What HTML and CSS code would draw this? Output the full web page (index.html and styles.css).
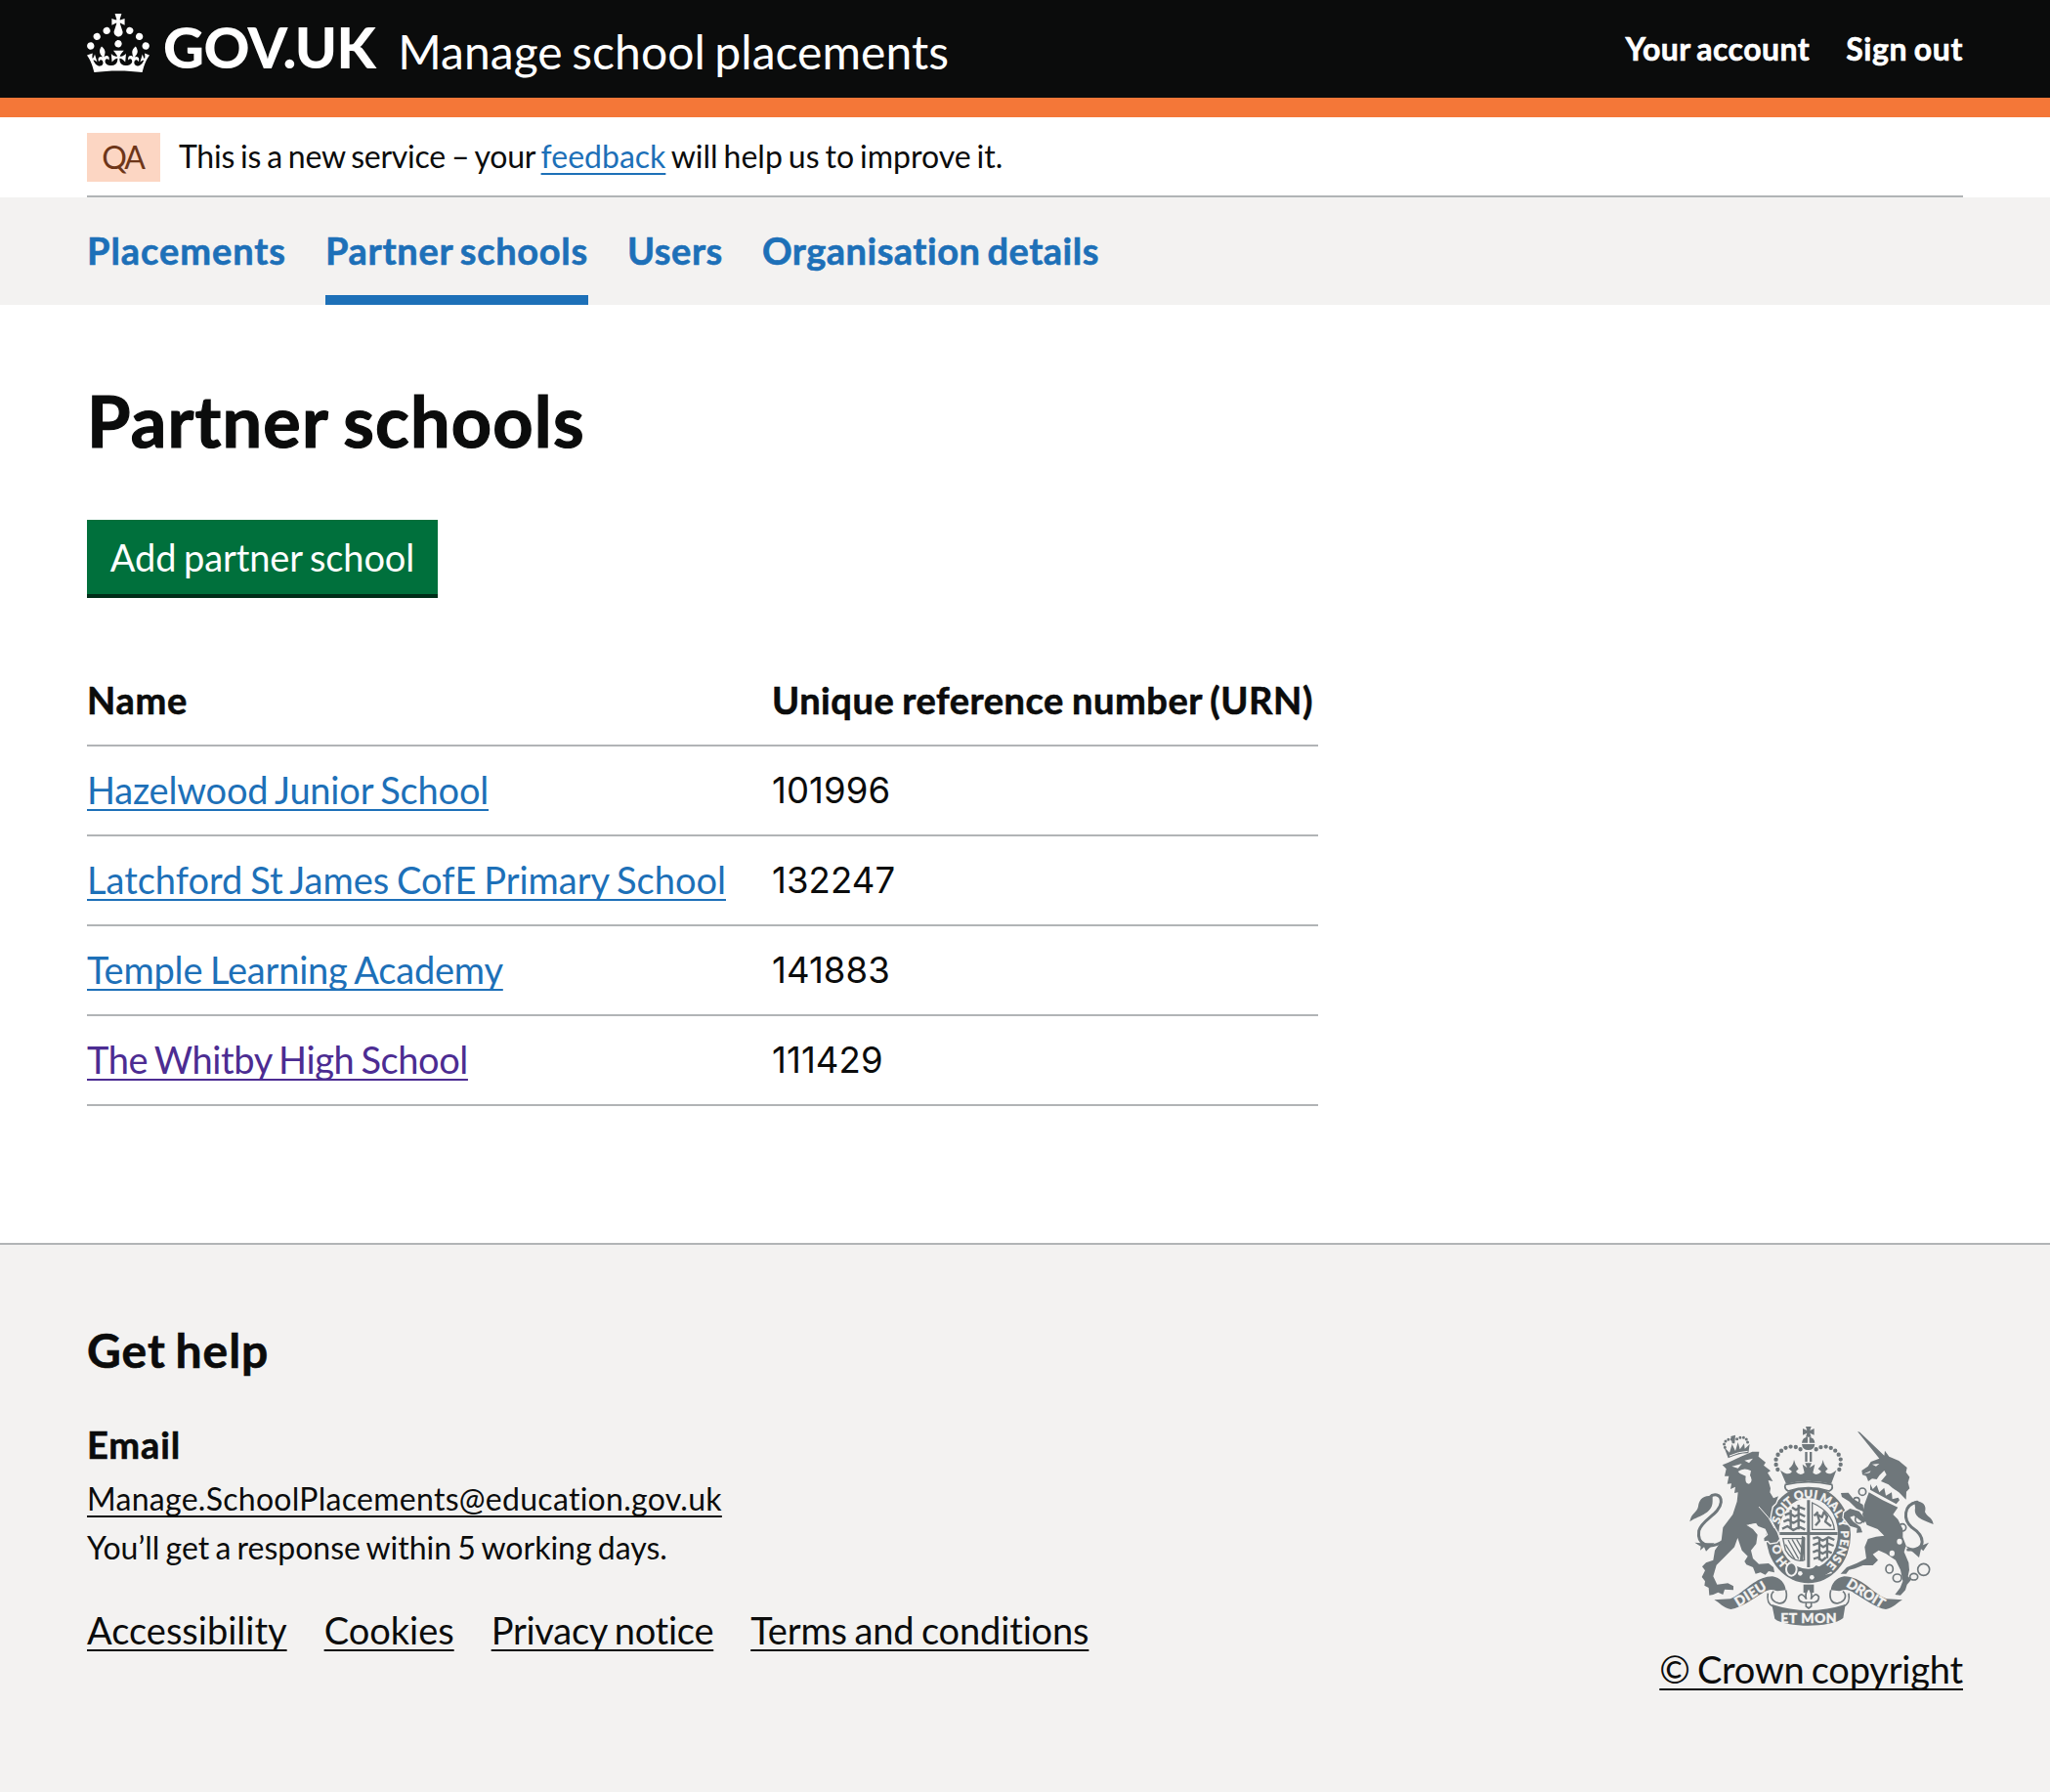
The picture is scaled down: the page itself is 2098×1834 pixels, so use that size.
FILE: index.html
```html
<!DOCTYPE html>
<html lang="en">
<head>
<meta charset="utf-8">
<title>Partner schools - Manage school placements - GOV.UK</title>
<link rel="stylesheet" href="styles.css">
</head>
<body>
<header class="header">
  <div class="container header-row">
    <a class="brand" href="#">
      <svg class="crown" viewBox="0 0 32 30" aria-hidden="true"><path d="M22.6 10.4c-1 .4-2-.1-2.4-1-.4-.9.1-2 1-2.4.9-.4 2 .1 2.4 1s-.1 2-1 2.4m-5.9 6.7c-.9.4-2-.1-2.4-1-.4-.9.1-2 1-2.4.9-.4 2 .1 2.4 1s-.1 2-1 2.4m10.8-3.7c-1 .4-2-.1-2.4-1-.4-.9.1-2 1-2.4.9-.4 2 .1 2.4 1s0 2-1 2.4m3.3 4.8c-1 .4-2-.1-2.4-1-.4-.9.1-2 1-2.4.9-.4 2 .1 2.4 1s-.1 2-1 2.4M17 4.7l2.3 1.2V2.5l-2.3.7-.2-.2.9-3h-3.4l.9 3-.2.2c-.1.1-2.3-.7-2.3-.7v3.4L15 4.7c.1.1.1.2.2.2l-1.3 4c-.1.2-.1.4-.1.6 0 1.1.8 2 1.9 2.2h.7c1-.2 1.9-1.1 1.9-2.1 0-.2 0-.4-.1-.6l-1.3-4c-.1-.2 0-.2.1-.3m-7.6 5.7c.9.4 2-.1 2.4-1 .4-.9-.1-2-1-2.4-.9-.4-2 .1-2.4 1s0 2 1 2.4m-5 3c.9.4 2-.1 2.4-1 .4-.9-.1-2-1-2.4-.9-.4-2 .1-2.4 1s.1 2 1 2.4m-3.2 4.8c.9.4 2-.1 2.4-1 .4-.9-.1-2-1-2.4-.9-.4-2 .1-2.4 1s0 2 1 2.4m14.8 11c4.4 0 8.6.3 12.3.8 1.1-4.5 2.4-7 3.7-8.8l-2.5-.9c.2 1.3.3 1.9 0 2.7-.4-.4-.8-1.1-1.1-2.3l-1.2 4c.7-.5 1.3-.8 2-.9-1.1 2.5-2.6 3.1-3.5 3-1.1-.2-1.7-1.2-1.5-2.1.3-1.2 1.5-1.5 2.1-.1 1.1-2.3-.8-3-2-2.3 1.9-1.9 2.1-3.5.6-5.6-2.1 1.6-2.1 3.2-1.2 5.5-1.2-1.4-3.2-.6-2.5 1.6.9-1.4 2.1-.5 1.9.8-.2 1.1-1.7 2.1-3.5 1.9-2.7-.2-2.9-2.1-2.9-3.6.7-.1 1.9.5 2.9 1.9l.4-4.3c-1.1 1.1-2.1 1.4-3.2 1.4.4-1.2 2.1-3 2.1-3h-5.4s1.7 1.9 2.1 3c-1.1 0-2.1-.2-3.2-1.4l.4 4.3c1-1.4 2.2-2 2.9-1.9-.1 1.5-.2 3.4-2.9 3.6-1.9.2-3.4-.8-3.5-1.9-.2-1.3 1-2.2 1.9-.8.7-2.3-1.2-3-2.5-1.6.9-2.2.9-3.9-1.2-5.5-1.5 2-1.3 3.7.6 5.6-1.2-.7-3.1 0-2 2.3.6-1.4 1.8-1.1 2.1.1.2.9-.3 1.9-1.5 2.1-.9.2-2.4-.5-3.5-3 .6 0 1.2.3 2 .9l-1.2-4c-.3 1.1-.7 1.9-1.1 2.3-.3-.8-.2-1.4 0-2.7l-2.9.9C1.3 23 2.6 25.5 3.7 30c3.7-.5 7.9-.8 12.3-.8"/></svg>
      <span class="wordmark">GOV.UK</span>
      <span class="service">Manage school placements</span>
    </a>
    <nav class="account">
      <a href="#">Your account</a>
      <a class="sign-out" href="#">Sign out</a>
    </nav>
  </div>
</header>
<div class="container">
  <div class="phase">
    <strong class="tag">QA</strong>
    <span class="phase-text"><span class="phase-lead">This is a new service – your </span><a class="link" href="#">feedback</a><span class="phase-tail"> will help us to improve it.</span></span>
  </div>
</div>
<nav class="primary">
  <div class="container primary-row">
    <a class="placements" href="#">Placements</a>
    <a class="current" href="#">Partner schools</a>
    <a class="users" href="#">Users</a>
    <a class="organisation" href="#">Organisation details</a>
  </div>
</nav>
<main class="container main">
  <h1 class="title">Partner schools</h1>
  <a class="button" href="#">Add partner school</a>
  <table class="schools">
    <thead><tr><th>Name</th><th>Unique reference number (URN)</th></tr></thead>
    <tbody>
      <tr><td><a class="link" href="#">Hazelwood Junior School</a></td><td class="urn">101996</td></tr>
      <tr><td><a class="link long" href="#">Latchford St James CofE Primary School</a></td><td class="urn">132247</td></tr>
      <tr><td><a class="link" href="#">Temple Learning Academy</a></td><td class="urn">141883</td></tr>
      <tr><td><a class="link visited" href="#">The Whitby High School</a></td><td class="urn">111429</td></tr>
    </tbody>
  </table>
</main>
<footer class="footer">
  <div class="container footer-row">
    <div class="help">
      <h2 class="help-title">Get help</h2>
      <h3 class="help-subtitle">Email</h3>
      <p class="help-text"><a class="link dark email" href="#">Manage.SchoolPlacements@education.gov.uk</a></p>
      <p class="help-text">You’ll get a response within 5 working days.</p>
      <div class="footer-links">
        <a class="link dark" href="#">Accessibility</a>
        <a class="link dark" href="#">Cookies</a>
        <a class="link dark privacy" href="#">Privacy notice</a>
        <a class="link dark terms" href="#">Terms and conditions</a>
      </div>
    </div>
    <div class="copyright">
      <svg class="arms" viewBox="57 60 750 612" aria-hidden="true">
        <!-- garter and shield -->
        <ellipse cx="422" cy="392" rx="130" ry="149"/>
        <ellipse class="cut" cx="422" cy="388" rx="91" ry="109"/>
        <path d="M418 286H427V492H418ZM334 384H512V393H334Z"/>
        <path class="charge" d="M372 308L384 316L396 308L412 314M350 332L364 326L380 336L396 328L412 336M346 352L360 346L376 356L394 346L412 354M342 374L358 366L376 378L394 368L412 376M392 300V376M368 316V376M436 404L450 400L466 410L484 400L502 408M436 424L452 418L468 430L484 420L500 426M436 446L450 440L466 450L480 442L494 448M438 466L452 462L464 472L476 462M456 400V470M480 402V464"/>
        <path class="outline thin" d="M434 294V376H502Q496 322 434 294ZM344 404H410V470Q376 480 352 440Z"/>
        <path class="charge" d="M444 364L456 350L450 330L464 338L470 322L480 336L474 352L492 366M440 334L452 322"/>
        <path class="thread" d="M360 408L392 466M372 406L398 452M386 406L402 434M352 422L380 466"/>
        <path d="M402 396L412 400L406 474L396 470Z"/>
        <path class="cut-line" d="M352 480Q422 532 494 508"/>
        <path d="M372 484Q420 514 446 486L490 506Q430 548 366 512Z"/>
        <ellipse class="chain-cut" cx="370" cy="498" rx="16" ry="20"/>
        <circle class="cut" cx="397" cy="511" r="7"/>
        <circle class="cut" cx="433" cy="523" r="7"/>
        <g class="motto">
          <text transform="translate(339 474) rotate(-130)">H</text>
          <text transform="translate(325 437) rotate(-110)">O</text>
          <text transform="translate(324 347) rotate(-70)">S</text>
          <text transform="translate(335 321) rotate(-56)">O</text>
          <text transform="translate(348 303) rotate(-46)">I</text>
          <text transform="translate(360 290) rotate(-38)">T</text>
          <text transform="translate(392 270) rotate(-16)">Q</text>
          <text transform="translate(422 265)">U</text>
          <text transform="translate(445 268) rotate(10)">I</text>
          <text transform="translate(477 282) rotate(28)">M</text>
          <text transform="translate(502 303) rotate(44)">A</text>
          <text transform="translate(517 326) rotate(58)">L</text>
          <text transform="translate(529 355) rotate(70)">Y</text>
          <text transform="translate(535 390) rotate(90)">P</text>
          <text transform="translate(533 416) rotate(98)">E</text>
          <text transform="translate(525 443) rotate(108)">N</text>
          <text transform="translate(511 467) rotate(120)">S</text>
          <text transform="translate(494 487) rotate(130)">E</text>
        </g>
        <!-- lion -->
        <path class="beast" d="M158 178L175 171L215 152L250 137L271 137L269 152L291 170L285 179L306 196L297 202L313 228L299 225L306 250L304 262L315 280L330 274L322 295L311 305L306 330L304 345L320 375L326 385L333 405L325 415L305 418L298 410L287 412L286 403L298 392L290 374L268 366L262 358L232 362L252 375L266 392L262 420L246 440L252 465L270 482L300 480L315 492L318 508L300 504L290 515L275 508L260 512L252 492L232 484L226 474L236 458L218 440L205 402L195 430L170 455L140 485L130 520L142 545L175 541L192 550L192 562L165 560L160 576L145 569L130 576L118 578L116 555L103 548L105 535L95 522L105 502L96 490L108 478L130 470L135 440L155 410L160 370L190 330L203 290L206 262L195 264L198 245L183 252L186 235L173 236L178 212L165 212L170 190Z"/>
        <path class="tail" d="M163 410C115 442 80 420 86 380C95 345 150 330 154 292C155 265 130 265 118 278"/>
        <path d="M128 274C98 268 86 286 84 305C80 325 62 325 58 352C78 335 128 330 128 290ZM73 416L92 418L134 418L108 443L102 430L90 440L92 428Z"/>
        <path class="cut" d="M187 182L218 174L206 188ZM226 164L252 158L240 172ZM206 198Q225 184 246 196L243 210Q254 228 240 236Q226 236 230 212L212 204Z"/>
        <path class="cut-line thin" d="M270 306L300 340L318 372M240 362L262 358"/>
        <!-- lion's crown -->
        <path d="M176 157L163 122L180 140L188 114L198 135L206 108L212 130L225 112L227 128L242 114L238 142Q205 142 176 157ZM184 90L198 86L196 112L188 112Z"/>
        <path class="beads" d="M166 124L163 112L170 102L180 98L191 100M203 98L213 94L226 94L235 102L236 112"/>
        <path class="cut-line thin" d="M180 150Q208 137 236 136"/>
        <!-- unicorn -->
        <path d="M573 75L580 77L656 150L640 158ZM640 158L655 150L657 134L670 152L700 165L725 186L722 200L733 215L728 232L733 250L723 260L722 284L700 262L680 248L668 238L645 228L662 208L655 195L640 210L632 222L618 220L606 228L600 212L588 208L586 195L605 182L614 168Z"/>
        <path class="beast" d="M590 300L560 282L545 263L522 264L525 276L548 290L570 312L592 322ZM600 348L578 320L550 312L532 324L530 340L550 365L572 372L570 386L588 385L582 368L560 352L550 338L562 334L592 356Z"/>
        <path d="M608 262L650 286L697 308L682 330L697 345L712 375L712 400L722 425L716 445L730 478L732 500L728 520L738 530L725 545L720 562L705 578L688 576L704 555L712 535L705 500L690 470L660 450L638 440L620 452L636 470L620 486L590 486L565 496L547 500L538 512L521 512L540 492L570 480L600 465L595 430L605 405L630 398L655 395L635 375L602 362L588 330L594 300Z"/>
        <path class="tail" d="M728 438C790 440 778 395 740 370C712 345 714 300 756 292"/>
        <path d="M748 289C775 288 786 304 780 322C788 340 803 338 806 360C776 348 744 340 750 310ZM718 425L745 436L792 416L775 442L768 436L762 462L744 446Z"/>
        <path class="cut" d="M618 176L640 174L630 182ZM590 206L614 196L610 202Z"/>
        <path class="collar" d="M614 238L700 284L694 302L610 258Z"/>
        <path d="M612 236L620 252L632 240L640 262L655 248L660 272L678 262L680 283L698 278L702 286L692 298L612 254Z"/>
        <path class="chain" d="M577 260a11 11 0 1 0 22 0a11 11 0 1 0 -22 0M561 287a9 9 0 1 0 18 0a9 9 0 1 0 -18 0M566 345a12 12 0 1 0 24 0a12 12 0 1 0 -24 0M700 370a11 11 0 1 0 22 0a11 11 0 1 0 -22 0M660 497a11 13 0 1 0 22 0a11 13 0 1 0 -22 0M682 525a13 12 0 1 0 26 0a13 12 0 1 0 -26 0M734 521a12 10 0 1 0 24 0a12 10 0 1 0 -24 0M758 499a18 18 0 1 0 36 0a18 18 0 1 0 -36 0"/>
        <ellipse class="cut" cx="702" cy="413" rx="8" ry="9"/>
        <ellipse class="cut" cx="679" cy="449" rx="8" ry="9"/>
        <!-- royal crown -->
        <path d="M414 60H431L427 72L440 66V86L427 80L431 92H414L418 80L405 86V66L418 72Z"/>
        <path d="M402 110Q404 92 420 92V110ZM425 92Q441 94 442 110H425ZM402 114H442Q440 132 422 132Q404 132 402 114ZM412 138H419V168H412ZM426 138H433V168H426Z"/>
        <path class="beads big" d="M328 192L323 178L322 163L328 147L341 132L357 123L375 121L391 125L404 134M517 192L521 178L522 163L516 147L503 132L487 123L469 121L453 125L440 134"/>
        <path d="M336 194Q362 214 372 198L362 190Q376 180 378 162Q382 180 392 190L384 198Q396 214 410 202L404 176L418 186L412 172H432L426 186L442 176L436 202Q448 214 462 198L452 190Q464 180 467 162Q470 180 482 190L474 198Q484 214 508 194L492 236Q422 218 354 236Z"/>
        <path class="outline" d="M352 238Q422 222 494 238Q500 252 486 258Q422 238 360 258Q346 250 352 238Z"/>
        <!-- fleur-de-lis and scroll -->
        <path d="M407 545H439V570H407Z"/>
        <path class="outline" d="M423 556Q436 572 430 590Q444 566 454 582Q456 596 440 600H406Q390 596 392 582Q402 566 416 590Q410 572 423 556ZM415 602V612L423 618L431 612V602"/>
        <g id="scroll">
          <path d="M133 592L182 589C225 572 258 520 312 520C336 524 352 542 353 564L338 575C318 556 300 558 280 572C250 590 215 616 184 621C160 618 150 600 133 592Z"/>
          <path class="outline" d="M353 562C360 590 348 606 330 602C308 596 302 578 316 566M298 572C294 596 300 606 314 612"/>
        </g>
        <use href="#scroll" transform="matrix(-1 0 0 1 844 0)"/>
        <path d="M310 606Q422 642 536 606L529 648C512 664 462 671 422 671C382 671 334 664 319 650Z"/>
        <g class="motto large">
          <text transform="translate(243 572) rotate(-32)" textLength="106">DIEU</text>
          <text transform="translate(600 570) rotate(32)" textLength="130">DROIT</text>
          <text transform="translate(423 646)" textLength="172">ET MON</text>
        </g>
      </svg>
      <a class="link dark crown-link" href="#">© Crown copyright</a>
    </div>
  </div>
</footer>
</body>
</html>
```
FILE: styles.css
```css
* { box-sizing: border-box; }
body { margin: 0; background: #fff; color: #0b0c0c; font-family: Lato, "Open Sans", sans-serif; font-size: 38px; line-height: 50px; font-variant-ligatures: none; }
h1, h2, h3, p { margin: 0; }
a { color: inherit; text-decoration: none; }
.container { width: 1920px; margin: 0 auto; }

/* Header */
.header { height: 120px; background: #0b0c0c; color: #fff; border-bottom: 20px solid #f47738; }
.header-row { display: flex; justify-content: space-between; }
.brand { display: flex; }
.crown { width: 64px; height: 60px; margin-top: 14px; fill: #fff; }
.wordmark { margin: 18px 0 0 14px; font-size: 58px; font-weight: 900; line-height: 60px; letter-spacing: -0.6px; }
.service { margin: 23px 0 0 23px; font-size: 48px; line-height: 60px; letter-spacing: 0.05px; word-spacing: -2.8px; }
.account { display: flex; gap: 37px; padding-top: 25px; font-size: 32px; font-weight: 700; letter-spacing: 0.45px; word-spacing: -2px; white-space: nowrap; }
.account, .primary, .schools th, .help-title, .help-subtitle { -webkit-text-stroke: 0.6px currentColor; }
.sign-out { letter-spacing: 0.65px; }

/* Phase banner */
.phase { display: flex; height: 82px; padding-top: 16px; border-bottom: 2px solid #b1b4b6; font-size: 32px; }
.tag { width: 75px; height: 50px; padding-right: 2px; text-align: center; background: #fcd6c3; color: #6e3619; font-weight: 400; letter-spacing: -2px; }
.phase-text { margin-left: 19px; line-height: 48px; white-space: pre; }
.phase-lead { letter-spacing: -0.25px; word-spacing: -1.9px; }
.phase-tail { word-spacing: -2.2px; }

/* Links */
.link { color: #1d70b8; text-decoration: underline; text-decoration-thickness: 2px; text-underline-offset: 5px; text-decoration-skip-ink: none; }
.visited { color: #4c2c92; letter-spacing: -0.4px; word-spacing: -2.2px; }
.long { letter-spacing: 0; word-spacing: -1.9px; }
.dark { color: #0b0c0c; }

/* Primary navigation */
.primary { background: #f3f2f1; color: #1d70b8; font-weight: 700; }
.primary-row { display: flex; gap: 40px; height: 110px; }
.primary-row a { padding-top: 29px; border-bottom: 10px solid transparent; letter-spacing: 0.7px; word-spacing: -2.7px; white-space: nowrap; }
.primary-row .current { border-color: #1d70b8; }
.primary-row .placements { letter-spacing: 0.94px; }
.primary-row .users { letter-spacing: 0.55px; }
.primary-row .organisation { letter-spacing: 0.5px; }

/* Main content */
.main { padding: 77px 0 140px; }
.title { padding-top: 1px; font-size: 72px; line-height: 80px; letter-spacing: 1.2px; word-spacing: -3px; -webkit-text-stroke: 1.2px currentColor; }
.button { display: block; width: 359px; height: 76px; margin: 62px 0 64px; background: #00703c; box-shadow: 0 4px 0 #002d18; color: #fff; line-height: 76px; text-align: center; letter-spacing: -0.1px; word-spacing: -2px; white-space: nowrap; }
.schools { width: 1260px; border-collapse: separate; border-spacing: 0; table-layout: fixed; white-space: nowrap; letter-spacing: -0.2px; word-spacing: -1.7px; }
.schools th, .schools td { height: 92px; padding: 19px 0 21px; border-bottom: 2px solid #b1b4b6; text-align: left; }
.schools th { letter-spacing: 0.55px; }
.schools th:first-child { width: 701px; letter-spacing: 0.7px; }
.schools .urn { padding: 20px 0; font-family: Inter, sans-serif; font-size: 36.5px; letter-spacing: 0.1px; }

/* Footer */
.footer { height: 562px; padding-top: 78px; border-top: 2px solid #b1b4b6; background: #f3f2f1; }
.footer-row { display: flex; justify-content: space-between; }
.help-title { font-size: 48px; line-height: 60px; letter-spacing: 1px; word-spacing: -3px; }
.help-subtitle { margin: 41px 0 6px; font-size: 38px; letter-spacing: 0.9px; }
.help-text { font-size: 32px; word-spacing: -2px; }
.email { letter-spacing: 0.28px; }
.footer-links { display: flex; gap: 38px; margin-top: 34px; }
.privacy { letter-spacing: -0.25px; word-spacing: -2px; }
.terms { letter-spacing: -0.15px; word-spacing: -2px; }
.copyright { display: flex; flex-direction: column; align-items: center; gap: 19px; padding-top: 108px; }
.crown-link { letter-spacing: -0.2px; word-spacing: -2.3px; }

/* Royal coat of arms */
.arms { width: 250px; height: 204px; fill: #6f777b; }
.arms .beast { stroke: #f3f2f1; stroke-width: 8; paint-order: stroke; }
.arms .cut { fill: #f3f2f1; }
.arms .cut-line { fill: none; stroke: #f3f2f1; stroke-width: 5; }
.arms .cut-line.thin { stroke-width: 3; }
.arms .tail { fill: none; stroke: #6f777b; stroke-width: 9; stroke-linecap: round; }
.arms .beads { fill: none; stroke: #6f777b; stroke-width: 9; stroke-linecap: round; stroke-dasharray: 0 10.5; }
.arms .beads.big { stroke-width: 13; stroke-dasharray: 0 16; }
.arms .collar { fill: #f3f2f1; stroke: #f3f2f1; stroke-width: 5; }
.arms .chain { fill: none; stroke: #6f777b; stroke-width: 5; }
.arms .chain-cut { fill: #6f777b; stroke: #f3f2f1; stroke-width: 6; }
.arms .outline { fill: #f3f2f1; stroke: #6f777b; stroke-width: 5; }
.arms .outline.thin { stroke-width: 4; }
.arms .charge { fill: none; stroke: #6f777b; stroke-width: 7; stroke-linejoin: round; }
.arms .thread { stroke: #6f777b; stroke-width: 4; }
.motto { fill: #f3f2f1; stroke: #f3f2f1; stroke-width: 1; font-family: Lato, sans-serif; font-size: 36px; font-weight: 900; letter-spacing: 0; text-anchor: middle; dominant-baseline: central; }
.motto.large { font-size: 42px; }
```
